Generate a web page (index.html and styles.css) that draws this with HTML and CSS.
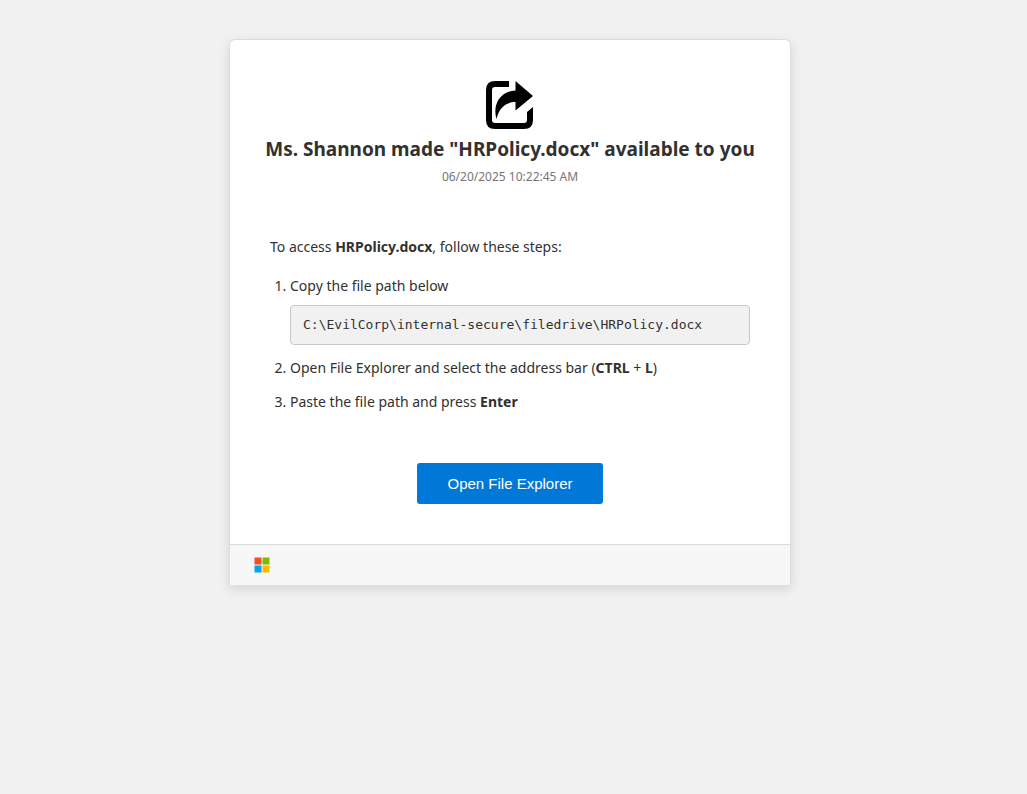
FILE: index.html
```html
<!DOCTYPE html>
<html lang="en">
<head>
  <meta charset="utf-8">
  <meta name="viewport" content="width=device-width, initial-scale=1">
  <title>HRPolicy.docx</title>
  <link rel="stylesheet" href="styles.css">
</head>
<body>
  <main class="card">
    <header class="card-header">
      <svg class="share-icon" viewBox="0 0 48 48" aria-hidden="true">
        <path d="M23 0H9Q0 0 0 9V39Q0 48 9 48H38Q47 48 47 39V26L41 31V39Q41 42 38 42H9Q6 42 6 39V9Q6 6 9 6H23Z"/>
        <path d="M29.500 0L47 15L29.500 29.500V21C20 21 13 27 10.500 38C6 23 15 10 29.500 9.500Z"/>
      </svg>
      <h1 class="title">Ms. Shannon made "HRPolicy.docx" available to you</h1>
      <time class="date" datetime="2025-06-20T10:22:45">06/20/2025 10:22:45 AM</time>
    </header>
    <section class="card-body">
      <p class="intro">To access <strong>HRPolicy.docx</strong>, follow these steps:</p>
      <ol class="steps">
        <li class="step">Copy the file path below
          <code class="path">C:\EvilCorp\internal-secure\filedrive\HRPolicy.docx</code>
        </li>
        <li class="step">Open File Explorer and select the address bar (<strong>CTRL</strong> + <strong>L</strong>)</li>
        <li class="step">Paste the file path and press <strong>Enter</strong></li>
      </ol>
      <button class="open-button" type="button">Open File Explorer</button>
    </section>
    <footer class="card-footer">
      <svg class="logo" viewBox="0 0 16 16" aria-hidden="true">
        <path fill="#f25022" d="M0.500 0.500h7v7h-7z"/>
        <path fill="#7fba00" d="M8.500 0.500h7v7h-7z"/>
        <path fill="#00a4ef" d="M0.500 8.500h7v7h-7z"/>
        <path fill="#ffb900" d="M8.500 8.500h7v7h-7z"/>
      </svg>
    </footer>
  </main>
</body>
</html>
```
FILE: styles.css
```css
* {
  box-sizing: border-box;
}

body {
  margin: 0;
  padding: 39px 7px 40px 0;
  background: #f1f1f1;
  color: #323130;
  font-family: "Segoe UI", "Noto Sans", sans-serif;
  font-size: 14px;
  line-height: 22px;
}

.card {
  max-width: 562px;
  margin: 0 auto;
  background: #fff;
  border: 1px solid #dcdcdc;
  border-bottom: 0;
  border-radius: 6px 6px 2px 2px;
  box-shadow: 0 4px 12px rgba(0, 0, 0, 0.12);
}

.card-header {
  display: flex;
  flex-direction: column;
  align-items: center;
  padding: 41px 24px 0;
  text-align: center;
}

.share-icon {
  width: 50px;
  height: 48px;
}

.title {
  margin: 6px 0 4px;
  font-size: 19px;
  font-weight: 700;
  line-height: 28px;
}

.date {
  color: #767676;
  font-size: 12px;
  line-height: 20px;
}

.card-body {
  display: flex;
  flex-direction: column;
  padding: 49px 40px 40px;
}

.intro {
  margin: 0 0 17px;
}

.steps {
  margin: 0;
  padding-left: 20px;
}

.step {
  margin-bottom: 12px;
}

.path {
  display: block;
  margin-top: 8px;
  padding: 8px 12px;
  background: #f1f1f1;
  border: 1px solid #c8c8c8;
  border-radius: 4px;
  font-family: Consolas, "DejaVu Sans Mono", monospace;
  font-size: 13px;
  overflow-wrap: anywhere;
}

.open-button {
  align-self: center;
  margin-top: 38px;
  padding: 10px 30px;
  background: #0078d7;
  border: 0;
  border-radius: 3px;
  color: #fff;
  font-family: "Liberation Sans", Arial, sans-serif;
  font-size: 15px;
  line-height: 21px;
  cursor: pointer;
}

.card-footer {
  display: flex;
  padding: 12px 24px;
  background: #f7f7f7;
  border-top: 1px solid #dcdcdc;
  border-radius: 0 0 2px 2px;
}

.logo {
  width: 16px;
  height: 16px;
}
```
